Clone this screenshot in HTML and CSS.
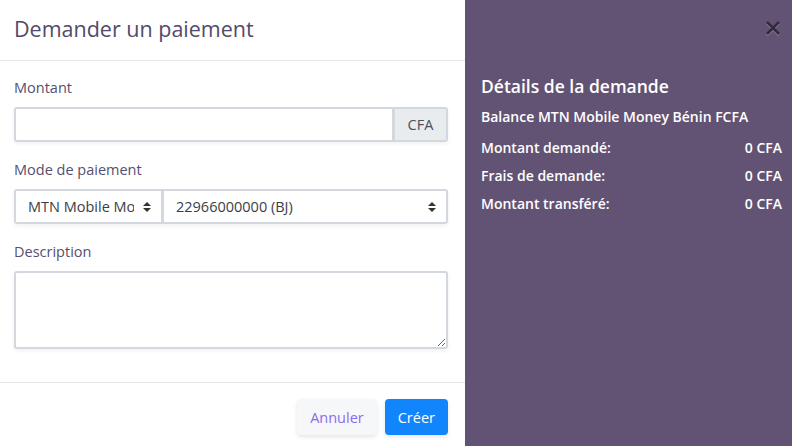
FILE: index.html
```html
<!DOCTYPE html>
<html lang="fr">
<head>
    <meta charset="UTF-8">
    <meta name="viewport" content="width=device-width, initial-scale=1.0">
    <title>Demander un paiement</title>
    <link rel="stylesheet" href="styles.css">
</head>
<body>
    <div class="modal">
        <div class="modal-main">
            <div class="modal-header">
                <h2 class="modal-title">Demander un paiement</h2>
            </div>
            <div class="modal-body">
                <div class="form-group">
                    <label class="form-label">Montant</label>
                    <div class="input-group">
                        <input type="text" class="form-control">
                        <span class="input-addon">CFA</span>
                    </div>
                </div>
                <div class="form-group">
                    <label class="form-label">Mode de paiement</label>
                    <div class="input-group">
                        <div class="select select-method">
                            <span class="select-text">MTN Mobile Money</span>
                            <span class="select-arrow"></span>
                        </div>
                        <div class="select select-number">
                            <span class="select-text">22966000000 (BJ)</span>
                            <span class="select-arrow"></span>
                        </div>
                    </div>
                </div>
                <div class="form-group">
                    <label class="form-label">Description</label>
                    <textarea class="form-control textarea"></textarea>
                </div>
            </div>
            <div class="modal-footer">
                <button class="btn btn-light">Annuler</button>
                <button class="btn btn-primary">Créer</button>
            </div>
        </div>
        <div class="modal-side">
            <button class="close" aria-label="Fermer">
                <svg width="18" height="18" viewBox="0 0 18 18">
                    <path d="M3 3 L15 15 M15 3 L3 15" stroke="#8f84a0" stroke-width="2.6" transform="translate(0 1)"/>
                    <path d="M3 3 L15 15 M15 3 L3 15" stroke="#302a3d" stroke-width="2.6"/>
                </svg>
            </button>
            <h3 class="side-title">Détails de la demande</h3>
            <p class="side-balance">Balance MTN Mobile Money Bénin FCFA</p>
            <div class="side-row"><span>Montant demandé:</span><span>0 CFA</span></div>
            <div class="side-row"><span>Frais de demande:</span><span>0 CFA</span></div>
            <div class="side-row"><span>Montant transféré:</span><span>0 CFA</span></div>
        </div>
    </div>
</body>
</html>
```

FILE: styles.css
```css
body {
    margin: 0;
    font-family: "Open Sans", "Noto Sans", sans-serif;
    background: #fff;
}
.modal {
    display: flex;
    width: 792px;
    height: 446px;
    overflow: hidden;
}
.modal-main {
    width: 465px;
    background: #fff;
    display: flex;
    flex-direction: column;
}
.modal-header {
    height: 60px;
    border-bottom: 1px solid #e7e7ea;
    padding: 0 14px;
    display: flex;
    align-items: center;
}
.modal-title {
    margin: 0;
    font-size: 21.5px;
    font-weight: 400;
    color: #514a6c;
    padding-bottom: 4px;
}
.modal-body {
    padding: 17px 17px 0 14px;
    height: 304px;
    border-bottom: 1px solid #e7e7ea;
}
.form-group {
    margin-bottom: 18px;
}
.form-label {
    display: block;
    font-size: 14.5px;
    line-height: 20px;
    color: #55506f;
    margin-bottom: 9px;
}
.input-group {
    display: flex;
    height: 35px;
    box-shadow: 0 2px 4px rgba(0, 0, 0, 0.06);
    border-radius: 3px;
}
.form-control {
    box-sizing: border-box;
    flex: 1;
    height: 35px;
    border: 2px solid #d3d7de;
    border-radius: 3px 0 0 3px;
    padding: 6px 12px;
    font: inherit;
    outline: none;
}
.input-addon {
    width: 54px;
    box-sizing: border-box;
    display: flex;
    align-items: center;
    justify-content: center;
    background: #e9ecef;
    border: 2px solid #d3d7de;
    border-left-width: 1px;
    border-radius: 0 3px 3px 0;
    font-size: 14.5px;
    color: #495057;
}
.select {
    box-sizing: border-box;
    display: flex;
    align-items: center;
    border: 2px solid #d3d7de;
    background: #fff;
    font-size: 14.5px;
    color: #3d3d48;
    padding: 0 10px 0 12px;
}
.select-method {
    width: 149px;
    border-radius: 3px 0 0 3px;
}
.select-number {
    flex: 1;
    border-left-width: 1px;
    border-radius: 0 3px 3px 0;
}
.select-text {
    flex: 1;
    white-space: nowrap;
    overflow: hidden;
}
.select-method .select-text {
    margin-right: 3px;
}
.select-arrow {
    position: relative;
    width: 8px;
    height: 12px;
    margin-left: 6px;
}
.select-arrow::before,
.select-arrow::after {
    content: "";
    position: absolute;
    left: 0;
    border-left: 4px solid transparent;
    border-right: 4px solid transparent;
}
.select-arrow::before {
    top: 1px;
    border-bottom: 4px solid #333;
}
.select-arrow::after {
    bottom: 1px;
    border-top: 4px solid #333;
}
.textarea {
    display: block;
    width: 100%;
    height: 78px;
    border-radius: 3px;
    resize: vertical;
    box-shadow: 0 2px 4px rgba(0, 0, 0, 0.06);
}
.modal-footer {
    display: flex;
    justify-content: flex-end;
    gap: 8px;
    padding: 16px 17px 0 14px;
}
.btn {
    height: 36px;
    border: none;
    border-radius: 4px;
    font-family: inherit;
    font-size: 14.5px;
    padding: 0 13px;
    cursor: pointer;
    box-shadow: 0 2px 4px rgba(0, 0, 0, 0.1);
}
.btn-light {
    background: #f6f7f9;
    color: #8a6cf0;
}
.btn-primary {
    background: #1185fb;
    color: #fff;
}
.modal-side {
    flex: 1;
    background: #625374;
    color: #fff;
    padding: 0 10px 0 16px;
    position: relative;
}
.close {
    position: absolute;
    top: 19px;
    right: 10px;
    background: none;
    border: none;
    padding: 0;
    cursor: pointer;
}
.side-title {
    margin: 74px 0 0;
    font-size: 17.5px;
    font-weight: 600;
}
.side-balance {
    margin: 9px 0 12px;
    font-size: 14px;
    font-weight: 600;
}
.side-row {
    display: flex;
    justify-content: space-between;
    font-size: 14px;
    font-weight: 600;
    margin-top: 9px;
}
```
